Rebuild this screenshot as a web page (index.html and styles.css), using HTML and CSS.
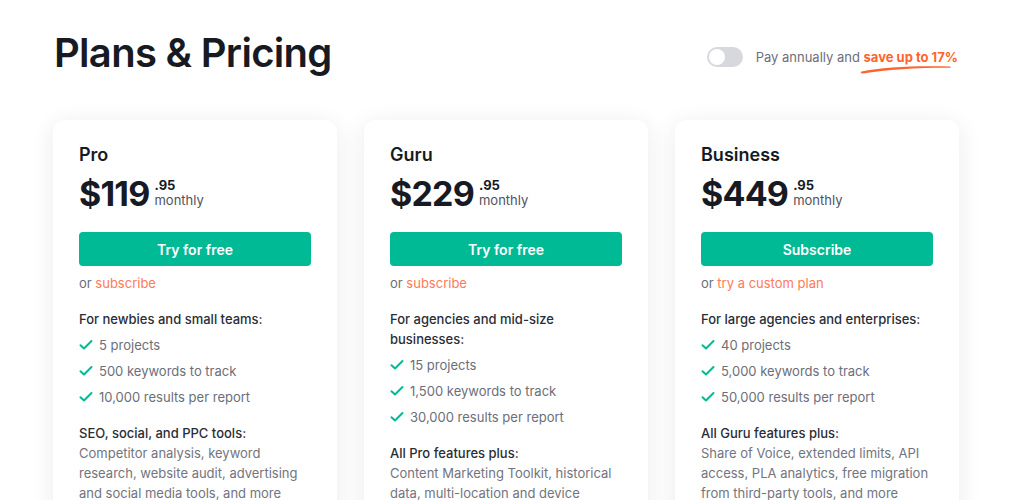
FILE: index.html
```html
<!DOCTYPE html>
<html lang="en">
<head>
  <meta charset="UTF-8" />
  <meta name="viewport" content="width=device-width, initial-scale=1.0" />
  <title>Plans &amp; Pricing</title>
  <link rel="stylesheet" href="styles.css">
</head>
<body>
  <div id="page">
    <div id="header">
      <h1>Plans &amp; Pricing</h1>
      <div id="billing">
        <span class="toggle"><span class="knob"></span></span>
        <span class="billing-text">Pay annually and <span class="save">save up to 17%
          <svg class="swoosh" width="92" height="10" viewBox="0 0 92 10"><path d="M1.5 7.5 C 22 3.5, 55 1.5, 90 2.6 C 91 2.8, 91 3.6, 90 3.7 C 58 3.6, 26 5.6, 3 9.4 C 1 9.8, 0 8, 1.5 7.5 Z" fill="#ff642d"/></svg>
        </span></span>
      </div>
    </div>

    <div id="plans">
      <div class="card">
        <div class="plan-name">Pro</div>
        <div class="price">
          <span class="amount">$119</span>
          <span class="price-side"><span class="cents">.95</span><span class="period">monthly</span></span>
        </div>
        <button class="cta">Try for free</button>
        <div class="alt">or <a href="#">subscribe</a></div>
        <div class="group-title">For newbies and small teams:</div>
        <ul class="checks">
          <li>5 projects</li>
          <li>500 keywords to track</li>
          <li>10,000 results per report</li>
        </ul>
        <div class="group-title">SEO, social, and PPC tools:</div>
        <p class="desc">Competitor analysis, keyword research, website audit, advertising and social media tools, and more</p>
      </div>

      <div class="card">
        <div class="plan-name">Guru</div>
        <div class="price">
          <span class="amount">$229</span>
          <span class="price-side"><span class="cents">.95</span><span class="period">monthly</span></span>
        </div>
        <button class="cta">Try for free</button>
        <div class="alt">or <a href="#">subscribe</a></div>
        <div class="group-title">For agencies and mid-size businesses:</div>
        <ul class="checks">
          <li>15 projects</li>
          <li>1,500 keywords to track</li>
          <li>30,000 results per report</li>
        </ul>
        <div class="group-title">All Pro features plus:</div>
        <p class="desc">Content Marketing Toolkit, historical data, multi-location and device tracking, Looker Studio integration, and more</p>
      </div>

      <div class="card">
        <div class="plan-name">Business</div>
        <div class="price">
          <span class="amount">$449</span>
          <span class="price-side"><span class="cents">.95</span><span class="period">monthly</span></span>
        </div>
        <button class="cta">Subscribe</button>
        <div class="alt">or <a href="#">try a custom plan</a></div>
        <div class="group-title">For large agencies and enterprises:</div>
        <ul class="checks">
          <li>40 projects</li>
          <li>5,000 keywords to track</li>
          <li>50,000 results per report</li>
        </ul>
        <div class="group-title">All Guru features plus:</div>
        <p class="desc">Share of Voice, extended limits, API access, PLA analytics, free migration from third-party tools, and more</p>
      </div>
    </div>
  </div>
</body>
</html>
```

FILE: styles.css
```css
body {
  margin: 0;
  background-color: #fff;
  font-family: Inter, "Noto Sans", sans-serif;
  color: #171a22;
  overflow: hidden;
}

#page {
  padding: 0 53px;
}

#header {
  display: flex;
  align-items: center;
  justify-content: space-between;
  height: 108px;
  padding-left: 1px;
  padding-right: 13px;
}

h1 {
  margin: 0;
  font-size: 40px;
  font-weight: 600;
  letter-spacing: -0.7px;
  padding-bottom: 3px;
}

#billing {
  display: flex;
  align-items: center;
  gap: 13px;
  font-size: 13px;
  color: #6c6e79;
  padding-top: 6px;
}

.toggle {
  width: 36px;
  height: 20px;
  border-radius: 10px;
  background-color: #d6d8de;
  display: flex;
  align-items: center;
  padding: 0 2px;
  box-sizing: border-box;
}

.knob {
  width: 16px;
  height: 16px;
  border-radius: 50%;
  background-color: #fff;
}

.save {
  position: relative;
  color: #ff642d;
  font-weight: 700;
}

.swoosh {
  position: absolute;
  left: -4px;
  top: 15px;
}

#plans {
  display: flex;
  gap: 27px;
  padding-top: 12px;
}

.card {
  width: 284px;
  box-sizing: border-box;
  background-color: #fff;
  border-radius: 12px;
  box-shadow: 0 4px 24px rgba(30, 35, 50, 0.09);
  padding: 24px 26px 20px;
  height: 420px;
}

.plan-name {
  font-size: 18px;
  font-weight: 600;
  line-height: 22px;
}

.price {
  display: flex;
  align-items: flex-start;
  gap: 5px;
  margin-top: 6px;
}

.amount {
  font-size: 34px;
  font-weight: 700;
  line-height: 44px;
  letter-spacing: -0.8px;
}

.price-side {
  display: flex;
  flex-direction: column;
  padding-top: 6px;
}

.cents {
  font-size: 13px;
  font-weight: 700;
  line-height: 14px;
}

.period {
  font-size: 13px;
  color: #4f525c;
  line-height: 16px;
}

.cta {
  display: block;
  width: 100%;
  height: 34px;
  margin-top: 16px;
  border: none;
  border-radius: 4px;
  background-color: #00b995;
  color: #fff;
  font-family: inherit;
  font-size: 14px;
  font-weight: 600;
}

.alt {
  margin-top: 9px;
  font-size: 13px;
  color: #6c6e79;
  line-height: 16px;
}

.alt a {
  color: #ff7a59;
  text-decoration: none;
}

.group-title {
  margin-top: 18px;
  font-size: 13px;
  font-weight: 500;
  color: #2a2d36;
  line-height: 20px;
}

.checks {
  list-style: none;
  margin: 0;
  padding: 0;
}

.checks li {
  padding-left: 20px;
  margin-top: 6px;
  font-size: 13px;
  line-height: 20px;
  color: #6c6e79;
  background: url("data:image/svg+xml,%3Csvg xmlns='http://www.w3.org/2000/svg' width='14' height='12' viewBox='0 0 14 12'%3E%3Cpath d='M1.5 6.2 L5 9.5 L12.5 2' stroke='%2300b995' stroke-width='2' fill='none' stroke-linecap='round' stroke-linejoin='round'/%3E%3C/svg%3E") no-repeat 0 4px;
}

.checks + .group-title {
  margin-top: 16px;
}

.desc {
  margin: 0;
  font-size: 13px;
  line-height: 20px;
  color: #72747e;
}
```
